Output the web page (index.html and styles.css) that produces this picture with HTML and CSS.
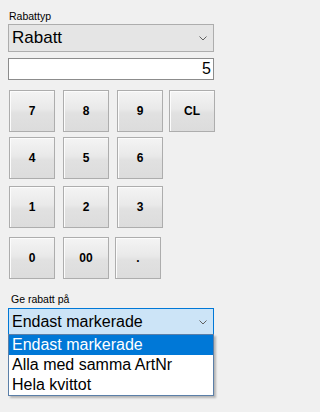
FILE: index.html
```html
<!DOCTYPE html>
<html>
<head>
<meta charset="utf-8">
<link rel="stylesheet" href="styles.css">
</head>
<body>
<div class="panel">
  <div class="label label-top">Rabattyp</div>
  <div class="combo combo-grey">
    <span class="combo-text big">Rabatt</span>
    <svg class="chev" width="8" height="5" viewBox="0 0 8 5"><path d="M0.5 0.5 L4 4 L7.5 0.5" fill="none" stroke="#606060" stroke-width="1"/></svg>
  </div>
  <div class="textbox">5</div>
  <div class="keypad">
    <div class="row row1">
      <button class="key">7</button>
      <button class="key">8</button>
      <button class="key">9</button>
      <button class="key key-cl">CL</button>
    </div>
    <div class="row row2">
      <button class="key">4</button>
      <button class="key">5</button>
      <button class="key">6</button>
    </div>
    <div class="row row3">
      <button class="key">1</button>
      <button class="key">2</button>
      <button class="key">3</button>
    </div>
    <div class="row row4">
      <button class="key">0</button>
      <button class="key">00</button>
      <button class="key key-dot">.</button>
    </div>
  </div>
  <div class="label label-bottom">Ge rabatt på</div>
  <div class="dropwrap">
    <div class="combo combo-focus">
      <span class="combo-text">Endast markerade</span>
      <svg class="chev" width="8" height="5" viewBox="0 0 8 5"><path d="M0.5 0.5 L4 4 L7.5 0.5" fill="none" stroke="#606060" stroke-width="1"/></svg>
    </div>
    <ul class="list">
      <li class="item selected">Endast markerade</li>
      <li class="item">Alla med samma ArtNr</li>
      <li class="item">Hela kvittot</li>
    </ul>
  </div>
</div>
</body>
</html>
```
FILE: styles.css
```css
html, body {
  margin: 0;
  padding: 0;
  background: #f0f0f0;
  font-family: "Liberation Sans", Arial, sans-serif;
  color: #000;
}
.panel {
  width: 225px;
  height: 412px;
  padding-left: 8px;
  box-sizing: border-box;
  display: flex;
  flex-direction: column;
}
.label {
  font-size: 10.5px;
  line-height: 12px;
  height: 12px;
  padding-left: 1px;
  color: #000;
}
.label-top {
  margin-top: 10px;
}
.combo {
  box-sizing: border-box;
  width: 206px;
  display: flex;
  align-items: center;
  justify-content: space-between;
  border: 1px solid #adadad;
}
.combo-grey {
  margin-top: 2px;
  height: 28px;
  background: #e5e5e5;
}
.combo-text {
  font-size: 16px;
  padding-left: 3px;
  white-space: nowrap;
}
.combo-text.big {
  font-size: 17px;
  padding-left: 3px;
}
.chev {
  margin-right: 6px;
  margin-top: 1px;
}
.textbox {
  box-sizing: border-box;
  margin-top: 6px;
  width: 206px;
  height: 22px;
  background: #fff;
  border: 1px solid #8c8c8c;
  font-size: 16px;
  line-height: 20px;
  text-align: right;
  padding-right: 2px;
}
.keypad {
  margin-top: 10px;
  margin-left: 1px;
  display: flex;
  flex-direction: column;
}
.row {
  display: flex;
  gap: 8px;
  height: 42px;
}
.row2 { margin-top: 5px; }
.row3 { margin-top: 7px; }
.row4 { margin-top: 9px; }
.key {
  box-sizing: border-box;
  width: 46px;
  height: 42px;
  margin: 0;
  padding: 0;
  border: 1px solid #adadad;
  background: linear-gradient(to bottom, #f4f4f4 0%, #e9e9e9 45%, #e1e1e1 55%, #dcdcdc 100%);
  box-shadow: inset 1px 1px 0 #fcfcfc;
  font-family: "Liberation Sans", Arial, sans-serif;
  font-weight: bold;
  font-size: 12px;
  color: #000;
}
.key-cl {
  margin-left: -2px;
}
.key-dot {
  margin-left: -2px;
}
.label-bottom {
  margin-top: 14px;
  padding-left: 3px;
}
.dropwrap {
  position: relative;
  margin-top: 3px;
}
.combo-focus {
  height: 27px;
  background: #cce4f7;
  border-color: #0078d7;
}
.list {
  position: absolute;
  left: 0;
  top: 26px;
  margin: 0;
  padding: 0;
  list-style: none;
  box-sizing: border-box;
  width: 206px;
  background: #fff;
  border: 1px solid #5b7fa8;
  box-shadow: 2px 2px 2px rgba(0,0,0,0.25);
}
.item {
  height: 20px;
  line-height: 20px;
  font-size: 16px;
  padding-left: 3px;
  white-space: nowrap;
}
.item.selected {
  background: #0078d7;
  color: #fff;
}
```
